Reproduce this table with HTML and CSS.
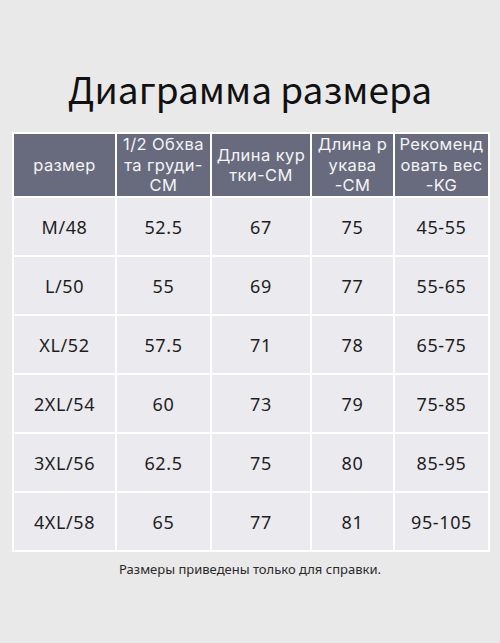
FILE: index.html
```html
<!DOCTYPE html>
<html lang="ru">
<head>
    <meta charset="UTF-8">
    <meta name="viewport" content="width=device-width, initial-scale=1.0">
    <title>Диаграмма размера</title>
    <link rel="stylesheet" href="styles.css">
</head>
<body>
    <div class="chart">
        <h1>Диаграмма размера</h1>
        <table class="sizes">
            <colgroup>
                <col class="c1"><col class="c2"><col class="c3"><col class="c4"><col class="c5">
            </colgroup>
            <thead>
                <tr>
                    <th>размер</th>
                    <th>1/2 Обхва<br>та груди-<br>СМ</th>
                    <th>Длина кур<br>тки-СМ</th>
                    <th>Длина р<br>укава<br>-СМ</th>
                    <th>Рекоменд<br>овать вес<br>-KG</th>
                </tr>
            </thead>
            <tbody>
                <tr><td>M/48</td><td>52.5</td><td>67</td><td>75</td><td>45-55</td></tr>
                <tr><td>L/50</td><td>55</td><td>69</td><td>77</td><td>55-65</td></tr>
                <tr><td>XL/52</td><td>57.5</td><td>71</td><td>78</td><td>65-75</td></tr>
                <tr><td>2XL/54</td><td>60</td><td>73</td><td>79</td><td>75-85</td></tr>
                <tr><td>3XL/56</td><td>62.5</td><td>75</td><td>80</td><td>85-95</td></tr>
                <tr><td>4XL/58</td><td>65</td><td>77</td><td>81</td><td>95-105</td></tr>
            </tbody>
        </table>
        <p class="note">Размеры приведены только для справки.</p>
    </div>
</body>
</html>
```

FILE: styles.css
```css
body { margin: 0; background: #e9e9e9; font-family: "Noto Sans", "Noto Sans CJK SC", sans-serif; color: #1e1e1e; }
.chart { padding: 66px 12px 0 12px; }
h1 { margin: 0 0 22px; font-family: "Noto Sans CJK SC", sans-serif; font-size: 37px; font-weight: 400; line-height: 44px; text-align: center; color: #111; }
.sizes { width: 476px; border-collapse: collapse; table-layout: fixed; border: 2px solid #fff; }
.sizes .c1 { width: 103px; }
.sizes .c2 { width: 95px; }
.sizes .c3 { width: 100px; }
.sizes .c4 { width: 83px; }
.sizes .c5 { width: 95px; }
.sizes th, .sizes td { border: 2px solid #fff; text-align: center; padding: 0; white-space: nowrap; }
.sizes th { background: #686b7d; color: #f4f4f6; font-family: Inter, "Noto Sans", sans-serif; font-weight: 400; font-size: 16.5px; line-height: 20.5px; height: 62px; letter-spacing: 0.4px; }
.sizes td { background: #ebebef; font-size: 18px; height: 57px; letter-spacing: 0.6px; }
.note { margin: 8px 0 0; text-align: center; font-size: 13px; color: #2a2a2a; }
```
